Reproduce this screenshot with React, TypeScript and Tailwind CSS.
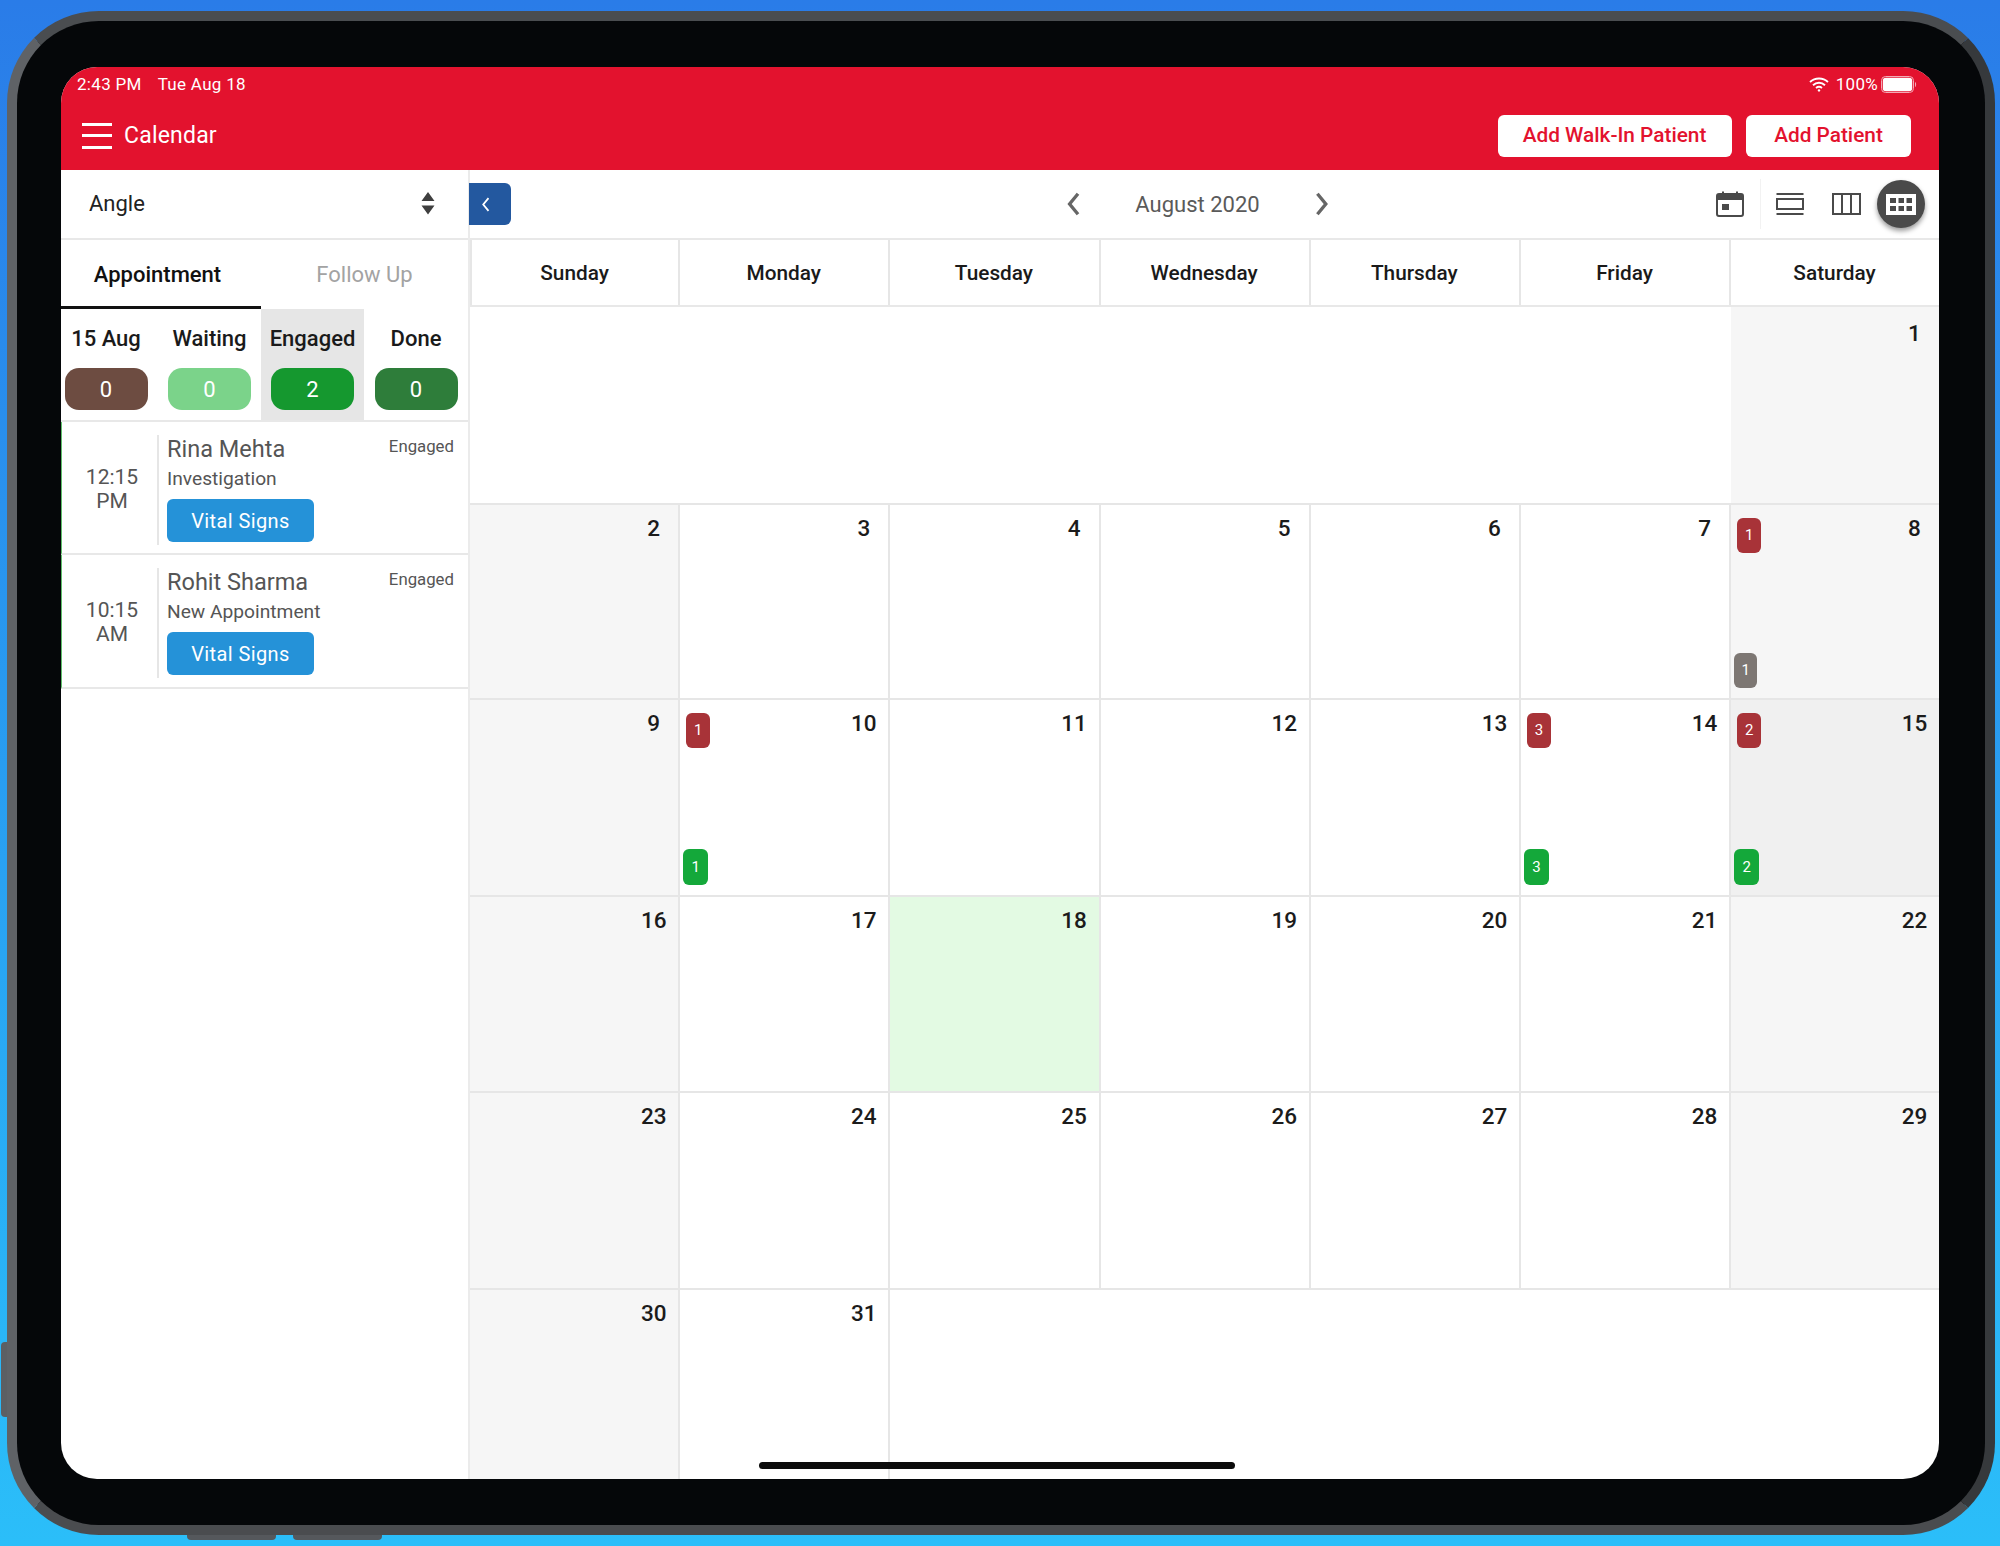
import React from "react";

const font = { fontFamily: "Roboto, sans-serif" };

function Sort() {
  return (
    <svg width="14" height="23" viewBox="0 0 14 23" className="fill-[#3f3f3f]">
      <path d="M7 0 L13.5 9 H0.5 Z M0.5 13.5 H13.5 L7 22.5 Z" />
    </svg>
  );
}
function Chevron({ dir, cls, size = 22, sw = 2.6 }: { dir: "l" | "r"; cls: string; size?: number; sw?: number }) {
  return (
    <svg width={size * 0.6} height={size} viewBox="0 0 12 20" fill="none" className={cls}>
      <path d={dir === "l" ? "M10 1.5 L3 10 L10 18.5" : "M2 1.5 L9 10 L2 18.5"} stroke="currentColor" strokeWidth={sw} />
    </svg>
  );
}
function Wifi() {
  return (
    <svg width="20" height="15" viewBox="0 0 20 15" fill="none" stroke="white" strokeWidth="1.9">
      <path d="M1 5 C6 0.3 14 0.3 19 5" />
      <path d="M4 8.2 C7.5 5 12.5 5 16 8.2" />
      <path d="M7 11 C8.8 9.6 11.2 9.6 13 11" />
      <circle cx="10" cy="13.4" r="1.2" fill="white" stroke="none" />
    </svg>
  );
}
function Battery() {
  return (
    <svg width="36" height="17" viewBox="0 0 36 17">
      <rect x="0.5" y="0.5" width="32" height="16" rx="4" fill="none" stroke="#f3a9b5" />
      <rect x="1.8" y="1.8" width="29.4" height="13.4" rx="3" fill="white" />
      <path d="M34 6 C35.5 6.5 35.5 10.5 34 11 Z" fill="#f3a9b5" />
    </svg>
  );
}
function CalIcon() {
  return (
    <svg width="28" height="26" viewBox="0 0 28 26" fill="none" className="text-[#4a4a4a]">
      <rect x="1" y="3" width="26" height="22" rx="2" stroke="currentColor" strokeWidth="2" />
      <rect x="1" y="3" width="26" height="6" fill="currentColor" />
      <path d="M7 0.5 V4 M21 0.5 V4" stroke="currentColor" strokeWidth="2" />
      <rect x="6" y="13" width="7" height="6" fill="currentColor" />
    </svg>
  );
}
function DayIcon() {
  return (
    <svg width="28" height="22" viewBox="0 0 28 22" fill="none" className="text-[#4a4a4a]">
      <path d="M0.5 1 H27.5 M0.5 21 H27.5" stroke="currentColor" strokeWidth="2" />
      <rect x="1" y="6" width="26" height="10" stroke="currentColor" strokeWidth="2" />
    </svg>
  );
}
function WeekIcon() {
  return (
    <svg width="29" height="22" viewBox="0 0 29 22" fill="none" className="text-[#4a4a4a]">
      <rect x="1" y="1" width="27" height="20" stroke="currentColor" strokeWidth="2" />
      <path d="M10 1 V21 M19 1 V21" stroke="currentColor" strokeWidth="2" />
    </svg>
  );
}
function MonthIcon() {
  return (
    <svg width="30" height="21" viewBox="0 0 30 21" className="fill-white">
      <path
        fillRule="evenodd"
        d="M0 0 H30 V21 H0 Z M4 4 V9 H10 V4 Z M12.5 4 V9 H18 V4 Z M20.5 4 V9 H26 V4 Z M4 12 V17 H10 V12 Z M12.5 12 V17 H18 V12 Z M20.5 12 V17 H26 V12 Z"
      />
    </svg>
  );
}

function Badge({ n, cls }: { n: number; cls: string }) {
  return (
    <div className={`flex items-center justify-center rounded-[6px] text-[15px] text-white ${cls}`}>
      {n}
    </div>
  );
}

type Cell = {
  d?: number;
  bg?: string;
  top?: number;
  bottom?: { n: number; cls: string };
};

const W = "bg-[#f6f6f6]";
const G = "h-[36px] w-[25px] bg-[#14a83a]";
const weeks: Cell[][] = [
  [{}, {}, {}, {}, {}, {}, { d: 1, bg: W }],
  [
    { d: 2, bg: W },
    { d: 3 },
    { d: 4 },
    { d: 5 },
    { d: 6 },
    { d: 7 },
    { d: 8, bg: W, top: 1, bottom: { n: 1, cls: "h-[35px] w-[23px] bg-[#7d7773]" } },
  ],
  [
    { d: 9, bg: W },
    { d: 10, top: 1, bottom: { n: 1, cls: G } },
    { d: 11 },
    { d: 12 },
    { d: 13 },
    { d: 14, top: 3, bottom: { n: 3, cls: G } },
    { d: 15, bg: "bg-[#f0f0f0]", top: 2, bottom: { n: 2, cls: G } },
  ],
  [
    { d: 16, bg: W },
    { d: 17 },
    { d: 18, bg: "bg-[#e3fae3]" },
    { d: 19 },
    { d: 20 },
    { d: 21 },
    { d: 22, bg: W },
  ],
  [
    { d: 23, bg: W },
    { d: 24 },
    { d: 25 },
    { d: 26 },
    { d: 27 },
    { d: 28 },
    { d: 29, bg: W },
  ],
  [{ d: 30, bg: W }, { d: 31 }, {}, {}, {}, {}, {}],
];

function DayCell({ c, i, wi, h }: { c: Cell; i: number; wi: number; h: string }) {
  const hasR = c.d !== undefined && i < 6;
  const noBottom = wi === 5 || wi === 0 || c.d === undefined;
  return (
    <div
      className={`flex ${h} justify-between pb-[10px] pl-[3px] pr-[11px] pt-[13px] ${c.bg ?? ""} ${
        hasR ? "border-r-2 border-r-[#e6e6e6]" : ""
      } ${noBottom ? "" : "border-b-2 border-b-[#e6e6e6]"}`}
    >
      <div className="flex flex-col justify-between">
        {c.top !== undefined ? (
          <div className="ml-[3px]">
            <Badge n={c.top} cls="h-[35px] w-[24px] bg-[#a83338]" />
          </div>
        ) : (
          <div />
        )}
        {c.bottom && <Badge n={c.bottom.n} cls={c.bottom.cls} />}
      </div>
      {c.d !== undefined && (
        <div
          className={`h-[28px] w-[27px] text-center text-[22.5px] font-medium leading-[28px] text-[#1b1b1b] ${
            wi === 0 ? "-mt-[1px]" : "-mt-[4px]"
          }`}
        >
          {c.d}
        </div>
      )}
    </div>
  );
}

function Patient({ time, ap, name, sub, h }: { time: string; ap: string; name: string; sub: string; h: string }) {
  return (
    <div className={`flex ${h} border-b-2 border-l border-b-[#e8e8e8] border-l-[#5fbf6b] pr-[14px] pt-[13px]`}>
      <div className="flex h-[110px] w-[97px] flex-col items-center justify-center border-r-2 border-r-[#e6e6e6] pb-[2px] pl-[5px] text-[21px] leading-[24px] text-[#555]">
        <span>{time}</span>
        <span>{ap}</span>
      </div>
      <div className="ml-[8px] flex flex-1 flex-col items-start">
        <div className="flex w-full items-start justify-between">
          <div className="text-[23.5px] leading-[28px] text-[#555]">{name}</div>
          <div className="mt-[1px] text-[16.8px] leading-[20px] text-[#555]">Engaged</div>
        </div>
        <div className="mt-[3px] text-[19.2px] leading-[26px] text-[#555]">{sub}</div>
        <div className="mt-[7px] flex h-[43px] w-[147px] items-center justify-center rounded-[6px] bg-[#2592d8] text-[20px] tracking-[0.4px] text-white">
          Vital Signs
        </div>
      </div>
    </div>
  );
}

function Stat({ label, n, cls, active, shift }: { label: string; n: number; cls: string; active?: boolean; shift?: boolean }) {
  return (
    <div className={`flex flex-col items-center pt-[16px] ${active ? "bg-[#e6e6e6]" : ""} ${shift ? "pr-[7px]" : ""}`}>
      <div className="text-[22px] font-medium leading-[28px] text-[#1a1a1a]">{label}</div>
      <div className={`mt-[15px] flex h-[42px] w-[83px] items-center justify-center rounded-[14px] text-[22px] text-white ${cls}`}>
        {n}
      </div>
    </div>
  );
}

export default function App() {
  const rowH = ["h-[196px]", "h-[195px]", "h-[197px]", "h-[196px]", "h-[197px]", "h-[193px]"];
  return (
    <div
      className="relative h-[1546px] w-[2000px] overflow-hidden bg-gradient-to-b from-[#2a7ce8] to-[#2bbef9] pl-[7px] pt-[11px]"
      style={font}
    >
      <div className="absolute left-[1px] top-[1342px] h-[75px] w-[7px] rounded-l-sm bg-[#5c5f63]" />
      <div className="absolute left-[187px] top-[1533px] h-[7px] w-[89px] rounded-b-sm bg-[#55585c]" />
      <div className="absolute left-[293px] top-[1533px] h-[7px] w-[89px] rounded-b-sm bg-[#55585c]" />

      <div className="relative h-[1524px] w-[1988px] rounded-[92px] border-[10px] border-t-[#4a4d50] border-r-[#36393c] border-b-[#4a4c4f] border-l-[#5f6266] bg-[#050709] pl-[44px] pt-[46px]">
        <div className="relative flex h-[1412px] w-[1878px] flex-col overflow-hidden rounded-[36px] bg-white">
          {/* Red header */}
          <div className="h-[103px] bg-[#e3122e] text-white">
            <div className="flex h-[34px] items-start justify-between pl-[16px] pr-[22px] pt-[7px]">
              <div className="flex gap-[16px] text-[17px] leading-[20px] tracking-[0.3px]">
                <span>2:43 PM</span>
                <span>Tue Aug 18</span>
              </div>
              <div className="flex items-center gap-[7px] text-[17px] leading-[20px] tracking-[0.3px]">
                <Wifi />
                <span>100%</span>
                <span className="-ml-[4px] flex">
                  <Battery />
                </span>
              </div>
            </div>
            <div className="flex h-[69px] items-center justify-between pl-[21px] pr-[28px]">
              <div className="flex items-center gap-[12px]">
                <div className="flex h-[26px] w-[30px] flex-col justify-between">
                  <div className="h-[3px] bg-white" />
                  <div className="h-[3px] bg-white" />
                  <div className="h-[3px] bg-white" />
                </div>
                <span className="pt-[1px] text-[23px] tracking-[0.2px]">Calendar</span>
              </div>
              <div className="flex gap-[14px]">
                <div className="flex h-[42px] w-[234px] items-center justify-center rounded-[6px] bg-white pr-[1px] text-[20.8px] font-medium text-[#e3122e]">
                  Add Walk-In Patient
                </div>
                <div className="flex h-[42px] w-[165px] items-center justify-center rounded-[6px] bg-white text-[20.8px] font-medium text-[#e3122e]">
                  Add Patient
                </div>
              </div>
            </div>
          </div>

          <div className="flex flex-1">
            {/* Sidebar */}
            <div className="w-[409px] border-r-2 border-r-[#ebebeb]">
              <div className="flex h-[70px] items-center justify-between border-b-2 border-b-[#e8e8e8] pb-[2px] pl-[28px] pr-[33px] text-[22px] text-[#222]">
                <span>Angle</span>
                <Sort />
              </div>
              <div className="grid h-[69px] grid-cols-[200px_1fr] text-[22px]">
                <div className="flex items-center justify-center border-b-[3px] border-b-[#111] pr-[7px] pt-[2px] font-medium text-[#111]">
                  Appointment
                </div>
                <div className="flex items-center justify-center pb-[1px] text-[#a3a3a3]">Follow Up</div>
              </div>
              <div className="grid h-[113px] grid-cols-[97px_103px_103px_1fr] border-b-2 border-b-[#e8e8e8]">
                <Stat label="15 Aug" n={0} cls="bg-[#6d4c41]" shift />
                <Stat label="Waiting" n={0} cls="bg-[#7bd38a]" />
                <Stat label="Engaged" n={2} cls="bg-[#15982f]" active />
                <Stat label="Done" n={0} cls="bg-[#2e7d3a]" />
              </div>
              <Patient h="h-[133px]" time="12:15" ap="PM" name="Rina Mehta" sub="Investigation" />
              <Patient h="h-[134px]" time="10:15" ap="AM" name="Rohit Sharma" sub="New Appointment" />
            </div>

            {/* Calendar */}
            <div className="flex flex-1 flex-col">
              <div className="relative flex h-[70px] items-center border-b-2 border-b-[#e8e8e8]">
                <div className="-ml-[1px] flex h-[42px] w-[42px] items-center justify-center rounded-r-[6px] bg-[#23589f] pr-[10px] text-white">
                  <Chevron dir="l" cls="text-white" size={15} sw={2.4} />
                </div>
                <div className="ml-[555px] flex w-[263px] items-center justify-between">
                  <Chevron dir="l" cls="text-[#666]" size={24} sw={2.8} />
                  <span className="text-[22px] text-[#5a5a5a]">August 2020</span>
                  <Chevron dir="r" cls="text-[#666]" size={24} sw={2.8} />
                </div>
                <div className="ml-auto flex items-center pr-[14px]">
                  <CalIcon />
                  <div className="ml-[16px] mr-[15px] h-[50px] w-px bg-[#f2f2f2]" />
                  <DayIcon />
                  <div className="ml-[28px]">
                    <WeekIcon />
                  </div>
                  <div className="ml-[16px] flex h-[48px] w-[48px] items-center justify-center rounded-full bg-[#4a4a4a] shadow-[0_3px_5px_rgba(0,0,0,0.4)]">
                    <MonthIcon />
                  </div>
                </div>
              </div>
              <div className="grid h-[67px] grid-cols-[repeat(6,210.2px)_1fr] border-b-2 border-b-[#e8e8e8]">
                {["Sunday", "Monday", "Tuesday", "Wednesday", "Thursday", "Friday", "Saturday"].map((d, i) => (
                  <div
                    key={d}
                    className={`flex items-center justify-center pr-[1px] pt-[3px] text-[20.8px] font-medium text-[#1a1a1a] ${
                      i < 6 ? "border-r-2 border-r-[#e6e6e6]" : ""
                    } ${i === 0 ? "border-l-2 border-l-[#e6e6e6]" : ""}`}
                  >
                    {d}
                  </div>
                ))}
              </div>
              {weeks.map((w, wi) => (
                <div
                  key={wi}
                  className={`grid grid-cols-[repeat(6,210.2px)_1fr] ${wi === 0 ? "border-b-2 border-b-[#e6e6e6]" : ""}`}
                >
                  {w.map((c, i) => (
                    <DayCell key={i} c={c} i={i} wi={wi} h={rowH[wi]} />
                  ))}
                </div>
              ))}
            </div>
          </div>

          <div className="absolute bottom-[10px] left-[698px] h-[7px] w-[476px] rounded-full bg-[#0b0b0b]" />
        </div>
      </div>
    </div>
  );
}
